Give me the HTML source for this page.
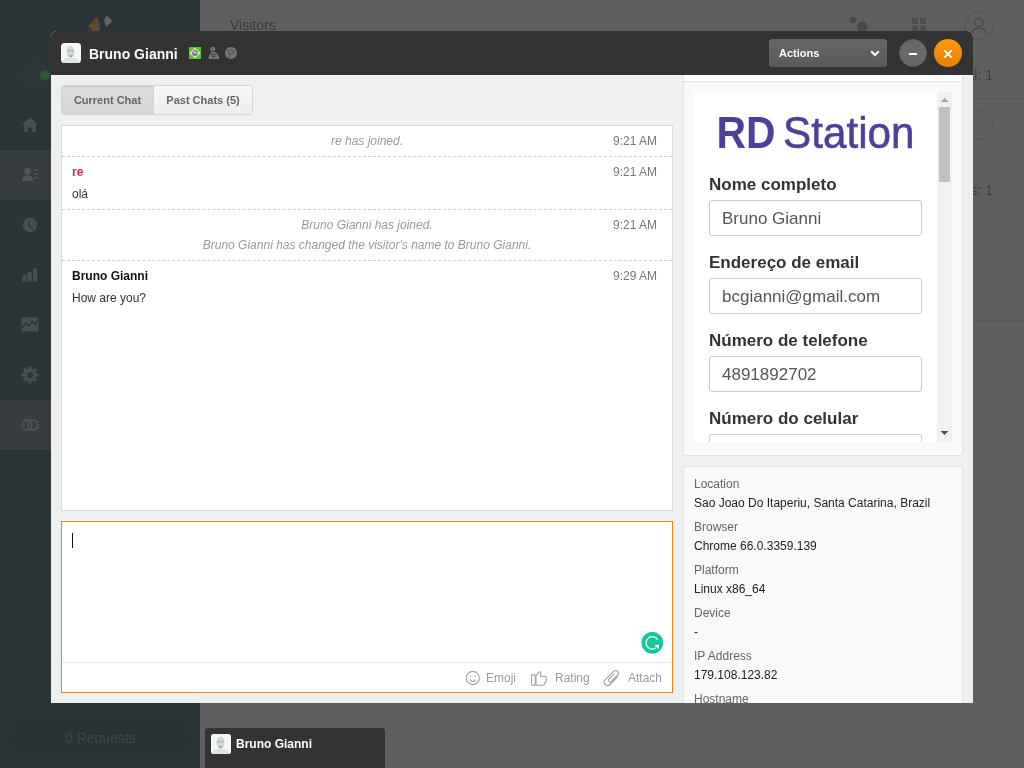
<!DOCTYPE html>
<html><head><meta charset="utf-8">
<style>
*{box-sizing:border-box;margin:0;padding:0}
html,body{width:1024px;height:768px;overflow:hidden;font-family:"Liberation Sans",sans-serif;}
body{position:relative;background:#5f5f5f;}
.a{position:absolute}
svg{display:block}
#side{left:0;top:0;width:200px;height:768px;background:#2b3537}
#main{left:200px;top:0;width:824px;height:768px;background:#5f5f5f}
.hl{left:0;width:200px;height:50px;background:#383e40}
.si{left:20px;width:20px;height:20px}
#modal{left:51px;top:31px;width:922px;height:672px;background:#eef0ef;border-radius:6px 6px 0 0;overflow:hidden}
#hdr{left:0;top:0;width:922px;height:44px;background:#333}
.title{left:38px;top:15px;color:#fff;font-weight:bold;font-size:14px;line-height:17px}
.avatar{border-radius:3px;overflow:hidden}
.sel{left:718px;top:8px;width:118px;height:28px;border-radius:3px;background:linear-gradient(#666,#5a5a5a);color:#fff;font-weight:bold;font-size:11px;line-height:28px;padding-left:10px}
.circ{width:28px;height:28px;border-radius:50%}
.tabs{left:10px;top:54px;height:30px;width:192px;border:1px solid #d4d4d4;border-radius:3px;overflow:hidden}
.tab{top:0;height:28px;font-weight:bold;font-size:11px;color:#666;line-height:28px;text-align:center}
.log{left:10px;top:94px;width:612px;height:386px;background:#fff;border:1px solid #dcdcdc}
.row{left:0;width:610px;border-bottom:1px dashed #cfcfcf}
.ts{right:15px;font-size:12px;color:#777;line-height:14px}
.sys{left:0;width:610px;text-align:center;font-style:italic;color:#999;font-size:12px;line-height:14px}
.nm{left:10px;font-weight:bold;font-size:12px;line-height:14px}
.msg{left:10px;font-size:12px;color:#333;line-height:14px}
.comp{left:10px;top:490px;width:612px;height:172px;background:#fff;border:1px solid #ef830b}
.ft{font-size:12px;color:#9a9a9a;line-height:14px}
.rp{left:632px;width:280px;border:1px solid #e2e2e2;background:#f9f9f9;border-radius:3px}
.lbl{left:15px;margin-top:1px;font-weight:bold;font-size:17px;color:#333;line-height:20px}
.inp{left:15px;width:213px;height:36px;border:1px solid #cbcbcb;border-radius:3px;background:#fff;font-size:17px;color:#555;line-height:36px;padding-left:12px}
.il{left:10px;font-size:12px;color:#666;line-height:14px}
.iv{left:10px;font-size:12px;color:#222;line-height:14px}
.gs{will-change:transform}</style></head><body>
<div id="side" class="a gs">
  <!-- logo -->
  <svg class="a" style="left:84px;top:12px" width="34" height="22" viewBox="0 0 34 22">
    <path d="M12.5 5 L4.3 14 L9.5 20 L15.5 20 C16.2 14 15.5 9 12.5 5Z" fill="#5e4a2f"/>
    <path d="M22.4 3 L28.5 9 L22.4 14.9 C19.8 11 19.8 7 22.4 3Z" fill="#626262"/>
  </svg>
  <div class="a" style="left:20px;top:60px;width:30px;height:30px;border-radius:50%;background:#2d3738"></div>
  <div class="a" style="left:40px;top:70px;width:10px;height:10px;border-radius:50%;background:#2a5837"></div>
  <div class="a hl" style="top:150px"></div>
  <div class="a hl" style="top:400px"></div>
  <!-- home -->
  <svg class="a" style="left:22px;top:117px" width="16" height="16" viewBox="0 0 16 16"><path d="M8 0.5 L16 7.8 L13.8 7.8 L13.8 15 L10 15 L10 10.5 L6 10.5 L6 15 L2.2 15 L2.2 7.8 L0 7.8Z" fill="#4a4e50"/></svg>
  <!-- contacts -->
  <svg class="a" style="left:22px;top:167px" width="17" height="15" viewBox="0 0 17 15"><circle cx="5.6" cy="4.2" r="3.2" fill="#525557"/><path d="M0 14 C0 10.2 2.4 8.6 5.6 8.6 C8.8 8.6 11.2 10.2 11.2 14Z" fill="#525557"/><rect x="12" y="2.4" width="3.8" height="1.5" fill="#525557"/><rect x="12" y="6.2" width="3.8" height="1.5" fill="#525557"/><rect x="12" y="10" width="3.8" height="1.5" fill="#525557"/></svg>
  <!-- clock -->
  <svg class="a" style="left:22px;top:217px" width="16" height="16" viewBox="0 0 16 16"><circle cx="8" cy="8" r="7.2" fill="#4a4e50"/><path d="M7 3.5 L7 8.5 L10.5 11.5" stroke="#2b3537" stroke-width="1.6" fill="none"/></svg>
  <!-- bars -->
  <svg class="a" style="left:22px;top:268px" width="16" height="14" viewBox="0 0 16 14"><rect x="0.5" y="7" width="4" height="6.5" fill="#4a4e50"/><rect x="5.7" y="4" width="4" height="9.5" fill="#4a4e50"/><rect x="11" y="0.5" width="4" height="13" fill="#4a4e50"/></svg>
  <!-- activity -->
  <svg class="a" style="left:21px;top:317px" width="18" height="15" viewBox="0 0 18 15"><rect x="0.5" y="0.5" width="17" height="14" rx="1" fill="#4a4e50"/><path d="M1 11 L5 6 L8 9 L11 4 L14 7 L17 3" stroke="#2b3537" stroke-width="1.5" fill="none"/></svg>
  <!-- gear -->
  <svg class="a" style="left:21px;top:366px" width="18" height="18" viewBox="0 0 18 18"><g fill="#4a4e50"><circle cx="9" cy="9" r="6.2"/><rect x="7.3" y="0.5" width="3.4" height="17"/><rect x="7.3" y="0.5" width="3.4" height="17" transform="rotate(45 9 9)"/><rect x="7.3" y="0.5" width="3.4" height="17" transform="rotate(90 9 9)"/><rect x="7.3" y="0.5" width="3.4" height="17" transform="rotate(135 9 9)"/></g><circle cx="9" cy="9" r="3" fill="#2b3537"/></svg>
  <!-- link -->
  <svg class="a" style="left:21px;top:418px" width="18" height="14" viewBox="0 0 18 14"><g fill="none" stroke="#4e5456" stroke-width="1.8"><circle cx="6" cy="7" r="4.8"/><circle cx="12" cy="7" r="4.8"/></g></svg>
  <!-- requests pill -->
  <div class="a" style="left:10px;top:718px;width:180px;height:40px;border-radius:20px;background:#2a3234;border:1px solid #2d3537"></div>
  <div class="a" style="left:65px;top:730px;font-size:14px;line-height:16px;color:#3f4749">0 Requests</div>
</div>
<div id="main" class="a gs">
  <div class="a" style="left:30px;top:17px;font-size:14px;line-height:16px;color:#3d3d3d">Visitors</div>
  <svg class="a" style="left:648px;top:15px" width="22" height="20" viewBox="0 0 22 20"><circle cx="5" cy="5" r="3.3" fill="#484848"/><circle cx="14.2" cy="11.8" r="5.3" fill="#484848"/></svg>
  <svg class="a" style="left:712px;top:18px" width="14" height="14" viewBox="0 0 14 14"><g fill="#4e4e4e"><rect x="0" y="0" width="6" height="6"/><rect x="8" y="0" width="6" height="6"/><rect x="0" y="8" width="6" height="6"/><rect x="8" y="8" width="6" height="6"/></g></svg>
  <svg class="a" style="left:764px;top:11px" width="30" height="30" viewBox="0 0 30 30"><circle cx="15" cy="15" r="14.2" fill="none" stroke="#555" stroke-width="1"/><circle cx="15" cy="11.5" r="4" fill="none" stroke="#4a4a4a" stroke-width="1.3"/><path d="M7.5 23 C8.5 18.5 11 17 15 17 C19 17 21.5 18.5 22.5 23" fill="none" stroke="#4a4a4a" stroke-width="1.3"/></svg>
  <div class="a" style="left:664px;top:49px;width:160px;height:1px;background:#5d5d5d"></div>
  <div class="a" style="left:600px;top:67px;width:193px;text-align:right;font-size:14px;line-height:16px;color:#3e3e3e">Total: 1</div>
  <div class="a" style="left:664px;top:98px;width:160px;height:1px;background:#585858"></div>
  <div class="a" style="left:764px;top:110px;width:30px;height:30px;border-radius:50%;border:1px solid #575757"></div>
  <div class="a" style="left:664px;top:148px;width:160px;height:1px;background:#5b5b5b"></div>
  <div class="a" style="left:600px;top:182px;width:193px;text-align:right;font-size:14px;line-height:16px;color:#3e3e3e">Visitors: 1</div>
  <div class="a" style="left:664px;top:256px;width:130px;height:1px;background:#595959"></div>
  <div class="a" style="left:664px;top:320px;width:160px;height:1px;background:#585858"></div>
</div>
<div id="modal" class="a gs">
  <div id="hdr" class="a">
    <svg class="a avatar" style="left:10px;top:12px" width="20" height="20" viewBox="0 0 20 20">
      <rect width="20" height="20" rx="2.5" fill="#f4f7f6"/>
      <path d="M1 20 C1.5 16.5 5 14.8 9.5 14.6 C14 14.8 18 16.5 19 20Z" fill="#dde3e2"/>
      <ellipse cx="9.5" cy="8.6" rx="4.1" ry="5.8" fill="#d2d8d7"/>
      <path d="M6.8 7.4 L8.8 7.8 M10.4 7.8 L12.3 7.4" stroke="#9aa3a2" stroke-width="1.1"/>
      <path d="M7.8 12.4 C8.8 13.4 10.4 13.4 11.4 12.4" stroke="#8c9695" stroke-width="1.3" fill="none"/>
    </svg>
    <div class="a title">Bruno Gianni</div>
    <!-- flag -->
    <svg class="a" style="left:138px;top:16px" width="12" height="12" viewBox="0 0 12 12">
      <rect width="12" height="12" fill="#4fc24f"/>
      <path d="M6 0.6 L11.8 6 L6 11.4 L0.2 6Z" fill="#f2ef3c"/>
      <circle cx="6" cy="6" r="3.1" fill="#7373d6"/>
      <path d="M3.6 4.8 C5 4.6 7 5.4 8.4 7" stroke="#fff" stroke-width="0.9" fill="none"/>
    </svg>
    <!-- tux -->
    <svg class="a" style="left:157px;top:15px" width="12" height="14" viewBox="0 0 12 14">
      <g fill="#767676">
        <ellipse cx="4.8" cy="3.2" rx="2.5" ry="2.4"/>
        <path d="M3.4 5.8 C2 7.6 0.4 10 0.4 13.2 L11.4 13.2 C11.4 10 9.6 7.6 7 5.8 Z"/>
      </g>
      <g fill="none" stroke="#3a3a3a" stroke-width="0.8">
        <path d="M3.8 3.6 L5.8 3.6"/>
        <path d="M2.6 5.7 L6.8 5.7"/>
        <path d="M3.4 8.2 L8.2 8.2 M3.6 10.2 L8.4 10.2"/>
        <path d="M2.2 6.6 L6.2 12.8"/>
      </g>
      <path d="M0 13.6 L5 13.6 M7 13.6 L12 13.6" stroke="#222" stroke-width="0.8"/>
    </svg>
    <!-- chrome -->
    <svg class="a" style="left:173px;top:15px" width="14" height="14" viewBox="0 0 14 14">
      <circle cx="6.9" cy="7.0" r="6.1" fill="#777"/>
      <circle cx="6.9" cy="6.2" r="2.5" fill="#727272" stroke="#484848" stroke-width="0.8"/>
      <path d="M5.8 8.6 L5 12.6 M2.2 2.8 L4.4 5.4 M9.4 5.6 L13 4.9" stroke="#505050" stroke-width="0.7"/>
    </svg>
    <div class="a sel">Actions
      <svg class="a" style="left:101px;top:11px" width="10" height="7" viewBox="0 0 10 7"><path d="M1.2 1.2 L5 5 L8.8 1.2" stroke="#fff" stroke-width="2" fill="none"/></svg>
    </div>
    <div class="a circ" style="left:848px;top:8px;background:#686868;border:1px solid #5e5e5e">
      <div class="a" style="left:9px;top:12.6px;width:8px;height:2.8px;background:#fff"></div>
    </div>
    <div class="a circ" style="left:883px;top:8px;background:linear-gradient(#f99b10,#e97e05)">
      <svg class="a" style="left:9px;top:10px" width="10" height="10" viewBox="0 0 10 10"><path d="M1.3 1.3 L8.7 8.7 M8.7 1.3 L1.3 8.7" stroke="#fff" stroke-width="1.8"/></svg>
    </div>
  </div>
  <div class="a tabs">
    <div class="a tab" style="left:0;width:91px;background:linear-gradient(#dedede,#d5d5d5);box-shadow:inset 0 1px 1px rgba(0,0,0,0.08)">Current Chat</div>
    <div class="a tab" style="left:91px;width:99px;background:linear-gradient(#f8f8f8,#ececec);border-left:1px solid #d0d0d0">Past Chats (5)</div>
  </div>
  <div class="a log">
    <div class="a row" style="top:0;height:31px">
      <div class="a sys" style="top:8px">re has joined.</div>
      <div class="a ts" style="top:8px">9:21 AM</div>
    </div>
    <div class="a row" style="top:31px;height:53px">
      <div class="a nm" style="top:8px;color:#d9263a">re</div>
      <div class="a msg" style="top:30px">olá</div>
      <div class="a ts" style="top:8px">9:21 AM</div>
    </div>
    <div class="a row" style="top:84px;height:51px">
      <div class="a sys" style="top:8px">Bruno Gianni has joined.</div>
      <div class="a sys" style="top:28px">Bruno Gianni has changed the visitor's name to Bruno Gianni.</div>
      <div class="a ts" style="top:8px">9:21 AM</div>
    </div>
    <div class="a" style="top:135px;left:0;width:610px;height:60px">
      <div class="a nm" style="top:8px;color:#111">Bruno Gianni</div>
      <div class="a msg" style="top:30px">How are you?</div>
      <div class="a ts" style="top:8px">9:29 AM</div>
    </div>
  </div>
  <div class="a comp">
    <div class="a" style="left:10px;top:11px;width:1px;height:15px;background:#111"></div>
    <svg class="a" style="left:579px;top:110px" width="23" height="23" viewBox="-0.5 0 23 23"><circle cx="10.8" cy="10.8" r="10.9" fill="#12c99a"/><path d="M16.3 8.0 A6.2 6.2 0 1 0 14.6 15.7" stroke="#fff" stroke-width="1.4" fill="none"/><path d="M12.6 13.6 L17.5 12.6 L17.5 17 Z" fill="#fff"/></svg>
    <div class="a" style="left:0;top:140px;width:610px;height:1px;background:#e8e8e8"></div>
    <svg class="a" style="left:403px;top:149px" width="16" height="16" viewBox="0 0 16 16"><g fill="none" stroke="#a0a0a0" stroke-width="1.1"><circle cx="7.8" cy="7" r="6.6"/><path d="M5.3 8.3 C5.5 11.3 10.1 11.3 10.3 8.3"/></g><circle cx="5.3" cy="5.3" r="0.75" fill="#a0a0a0"/><circle cx="10.3" cy="5.3" r="0.75" fill="#a0a0a0"/></svg>
    <div class="a ft" style="left:424px;top:149px">Emoji</div>
    <svg class="a" style="left:469px;top:149px" width="17" height="16" viewBox="0 0 17 16"><g fill="none" stroke="#a0a0a0" stroke-width="1.1" stroke-linejoin="round"><rect x="0.6" y="3.9" width="3.6" height="10.4" rx="0.3"/><path d="M5 4.8 L7.4 2.2 C7.7 1.2 8.2 0.6 9 0.7 C10 0.9 10.1 2 9.8 3 L9.1 5.3 L13.6 5.3 C14.8 5.3 15.5 6.2 15.2 7.2 C15.7 7.6 15.6 8.6 15 9 C15.3 9.6 15.1 10.4 14.5 10.7 C14.7 11.4 14.3 12.2 13.6 12.4 C13.6 13.4 13 14.3 12 14.3 L5 14.3 Z"/></g></svg>
    <div class="a ft" style="left:493px;top:149px">Rating</div>
    <svg class="a" style="left:541px;top:149px;overflow:visible" width="18" height="17" viewBox="0 0 18 17"><path transform="translate(4.6 11.1) rotate(-45)" d="M9.7 -1.2 L3.1 -1.2 A1.7 1.7 0 0 0 3.1 2.2 L11.9 2.2 A2.8 2.8 0 0 0 11.9 -3.4 L0 -3.4 A3.4 3.4 0 0 0 0 3.4 L10 3.4" fill="none" stroke="#a0a0a0" stroke-width="1.1" stroke-linecap="round"/></svg>
    <div class="a ft" style="left:566px;top:149px">Attach</div>
  </div>
  <!-- right column -->
  <div class="a" style="left:632px;top:44px;width:280px;height:7px;background:#fff;border:1px solid #e2e2e2;border-top:none"></div>
  <div class="a rp" style="top:50px;height:375px">
    <div class="a" style="left:10px;top:10px;width:258px;height:350px;background:#fff;overflow:hidden">
      <svg class="a" style="left:0;top:0" width="243" height="70" viewBox="0 0 243 70">
        <text x="22.5" y="56" font-family="Liberation Sans" font-weight="bold" font-size="45" fill="#4e3f9b" textLength="59" lengthAdjust="spacingAndGlyphs">RD</text>
        <text x="89" y="55.8" font-family="Liberation Sans" font-size="44.8" fill="#4e3f9b" stroke="#4e3f9b" stroke-width="0.6" textLength="131.5" lengthAdjust="spacingAndGlyphs">Station</text>
      </svg>
      <div class="a lbl" style="top:82px">Nome completo</div>
      <div class="a inp" style="top:108px">Bruno Gianni</div>
      <div class="a lbl" style="top:160px">Endereço de email</div>
      <div class="a inp" style="top:186px">bcgianni@gmail.com</div>
      <div class="a lbl" style="top:238px">Número de telefone</div>
      <div class="a inp" style="top:264px">4891892702</div>
      <div class="a lbl" style="top:316px">Número do celular</div>
      <div class="a inp" style="top:342px"></div>
      <div class="a" style="left:243px;top:0;width:15px;height:350px;background:#f1f1f1"></div>
      <div class="a" style="left:245px;top:15px;width:11px;height:75px;background:#c1c1c1"></div>
      <svg class="a" style="left:246px;top:5px" width="9" height="6" viewBox="0 0 9 6"><path d="M0.5 5 L4.5 1 L8.5 5Z" fill="#a3a3a3"/></svg>
      <svg class="a" style="left:246px;top:338px" width="9" height="6" viewBox="0 0 9 6"><path d="M0.5 1 L4.5 5 L8.5 1Z" fill="#505050"/></svg>
    </div>
  </div>
  <div class="a rp" style="top:435px;height:262px">
    <div class="a il" style="top:10px">Location</div>
    <div class="a iv" style="top:29px">Sao Joao Do Itaperiu, Santa Catarina, Brazil</div>
    <div class="a il" style="top:53px">Browser</div>
    <div class="a iv" style="top:72px">Chrome 66.0.3359.139</div>
    <div class="a il" style="top:96px">Platform</div>
    <div class="a iv" style="top:115px">Linux x86_64</div>
    <div class="a il" style="top:139px">Device</div>
    <div class="a iv" style="top:158px">-</div>
    <div class="a il" style="top:182px">IP Address</div>
    <div class="a iv" style="top:201px">179.108.123.82</div>
    <div class="a il" style="top:225px">Hostname</div>
  </div>
</div>
<div class="a gs" style="left:205px;top:728px;width:180px;height:40px;background:#333;border-radius:3px 3px 0 0">
  <svg class="a" style="left:6px;top:6px" width="20" height="20" viewBox="0 0 20 20">
      <rect width="20" height="20" rx="2.5" fill="#f4f7f6"/>
      <path d="M1 20 C1.5 16.5 5 14.8 9.5 14.6 C14 14.8 18 16.5 19 20Z" fill="#dde3e2"/>
      <ellipse cx="9.5" cy="8.6" rx="4.1" ry="5.8" fill="#d2d8d7"/>
      <path d="M6.8 7.4 L8.8 7.8 M10.4 7.8 L12.3 7.4" stroke="#9aa3a2" stroke-width="1.1"/>
      <path d="M7.8 12.4 C8.8 13.4 10.4 13.4 11.4 12.4" stroke="#8c9695" stroke-width="1.3" fill="none"/>
  </svg>
  <div class="a" style="left:31px;top:9px;color:#fff;font-weight:bold;font-size:12px;line-height:15px">Bruno Gianni</div>
</div>
</body></html>
